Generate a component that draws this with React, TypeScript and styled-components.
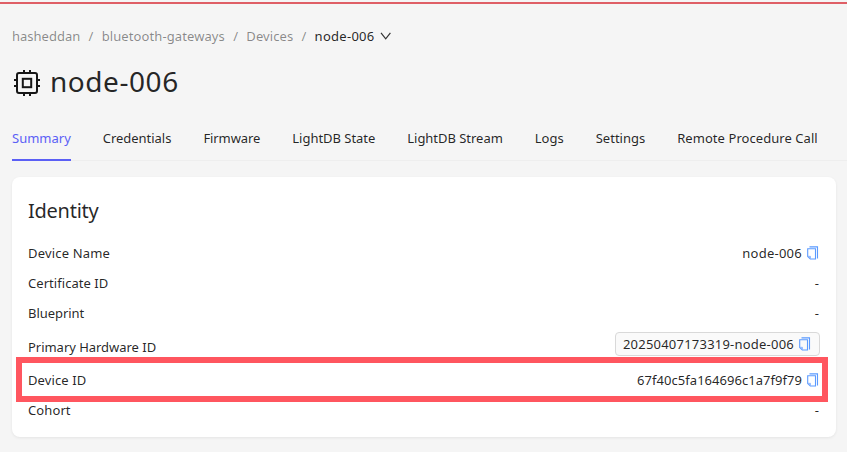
import React from "react";
import styled, { createGlobalStyle } from "styled-components";

const GlobalStyle = createGlobalStyle`
  * { box-sizing: border-box; }
  body {
    margin: 0;
    background: #f5f5f5;
    color: rgba(0, 0, 0, 0.86);
    font: 14px/22px "Noto Sans", sans-serif;
    overflow: hidden;
  }
`;

const Page = styled.main`
  height: 452px;
  display: flex;
  flex-direction: column;
  background: #f5f5f5;
  overflow: hidden;
`;

const TopLine = styled.div`
  height: 4px;
  flex: none;
  border-top: 2px solid #f5f5f5;
  background: #df5f66;
`;

const Text = styled.span<{ $spacing?: number }>`
  letter-spacing: ${(p) => p.$spacing ?? 0}px;
`;

const Breadcrumb = styled.nav`
  display: flex;
  align-items: center;
  height: 22px;
  margin: 21px 12px 0;
  font-size: 13px;
  white-space: nowrap;
  color: rgba(0, 0, 0, 0.45);
`;

const Separator = styled.span`
  width: 21.4px;
  text-align: center;
`;

const Current = styled.span`
  display: flex;
  align-items: center;
  gap: 5px;
  color: rgba(0, 0, 0, 0.86);
`;

const Heading = styled.header`
  display: flex;
  align-items: center;
  gap: 10px;
  height: 38px;
  margin: 16px 12px 0;
`;

const Title = styled.h1`
  margin: -3px 0 0;
  font-size: 28px;
  font-weight: 400;
  line-height: 38px;
  letter-spacing: 0.55px;
`;

const Tabs = styled.nav`
  display: flex;
  gap: 32px;
  height: 46px;
  margin: 14px 0 0 12px;
  border-bottom: 1px solid #eeeeee;
  white-space: nowrap;
`;

const Tab = styled.a<{ $active?: boolean; $spacing: number }>`
  height: 46px;
  padding-top: 12px;
  font-size: 13px;
  letter-spacing: ${(p) => p.$spacing}px;
  color: ${(p) => (p.$active ? "#5b5ff5" : "inherit")};
  border-bottom: 2px solid ${(p) => (p.$active ? "#5b5ff5" : "transparent")};
`;

const Card = styled.section`
  width: 824px;
  height: 260px;
  flex: none;
  margin: 16px 0 0 12px;
  padding: 16px;
  background: #fff;
  border-radius: 8px;
  box-shadow: 0 1px 3px rgba(0, 0, 0, 0.07);
`;

const CardTitle = styled.h2`
  margin: 3px 0 16px;
  font-size: 20px;
  font-weight: 400;
  line-height: 30px;
  letter-spacing: -0.25px;
`;

const Rows = styled.dl`
  display: flex;
  flex-direction: column;
  gap: 8px;
  margin: 0;
`;

const Row = styled.div<{ $tall?: boolean; $marked?: boolean }>`
  display: flex;
  justify-content: space-between;
  align-items: center;
  height: ${(p) => (p.$tall ? 29 : 22)}px;
  font-size: 13px;
  ${(p) =>
    p.$marked &&
    `
    height: 33px;
    margin: -6px -2px -5px -6px;
    padding: 0 2px 0 6px;
    outline: 6px solid #ff565f;
  `}
`;

const Label = styled.dt<{ $spacing?: number }>`
  letter-spacing: ${(p) => p.$spacing ?? 0}px;
`;

const Value = styled.dd<{ $empty?: boolean }>`
  display: flex;
  align-items: center;
  gap: 4px;
  margin: 0;
  padding-right: ${(p) => (p.$empty ? 1 : 0)}px;
`;

const Tag = styled.dd`
  display: flex;
  align-items: center;
  align-self: flex-start;
  gap: 4px;
  height: 24px;
  margin: 0;
  padding: 0 7px;
  background: #fafafa;
  border: 1px solid #d9d9d9;
  border-radius: 4px;
`;

const CopyIcon = () => (
  <svg width="14" height="14" viewBox="0 0 14 14" fill="none" stroke="#5b9aff">
    <path d="M3.5 .9h8v11.6" strokeWidth="1.1" />
    <path d="M1.7 2.8h7.8v10.2H4.3L1.7 10.5z" strokeWidth="1.1" />
    <path d="M2 10.3h2.5v2.5z" fill="#8db8ff" stroke="#8db8ff" strokeWidth=".8" />
  </svg>
);

const ChipIcon = () => (
  <svg width="28" height="28" viewBox="0 0 28 28" fill="none" stroke="#161616">
    <rect x="5" y="5" width="20" height="20" rx="2" strokeWidth="2" />
    <rect x="10.8" y="10.8" width="8.4" height="8.4" strokeWidth="2" />
    <path
      d="M12 2v3M18 2v3M12 25v3M18 25v3M2 12h3M2 18h3M25 12h3M25 18h3"
      strokeWidth="2"
    />
  </svg>
);

const ChevronIcon = () => (
  <svg width="12" height="8" viewBox="0 0 12 8" fill="none" stroke="#333" strokeWidth="1.2">
    <path d="M1 .8l4.7 6 4.7-6" />
  </svg>
);

const tabs: [string, number][] = [
  ["Summary", 0],
  ["Credentials", -0.03],
  ["Firmware", -0.08],
  ["LightDB State", -0.03],
  ["LightDB Stream", -0.03],
  ["Logs", 0],
  ["Settings", 0],
  ["Remote Procedure Call", 0.06],
];

export default function App() {
  return (
    <Page>
      <GlobalStyle />
      <TopLine />
      <Breadcrumb>
        <Text>hasheddan</Text>
        <Separator>/</Separator>
        <Text $spacing={0.1}>bluetooth-gateways</Text>
        <Separator>/</Separator>
        <Text $spacing={0.08}>Devices</Text>
        <Separator>/</Separator>
        <Current>
          <Text $spacing={0.28}>node-006</Text>
          <ChevronIcon />
        </Current>
      </Breadcrumb>
      <Heading>
        <ChipIcon />
        <Title>node-006</Title>
      </Heading>
      <Tabs>
        {tabs.map(([name, spacing], i) => (
          <Tab key={name} $active={i === 0} $spacing={spacing}>
            {name}
          </Tab>
        ))}
      </Tabs>
      <Card>
        <CardTitle>Identity</CardTitle>
        <Rows>
          <Row>
            <Label $spacing={0.18}>Device Name</Label>
            <Value>
              <Text $spacing={0.25}>node-006</Text>
              <CopyIcon />
            </Value>
          </Row>
          <Row>
            <Label $spacing={0.05}>Certificate ID</Label>
            <Value $empty>-</Value>
          </Row>
          <Row>
            <Label $spacing={-0.05}>Blueprint</Label>
            <Value $empty>-</Value>
          </Row>
          <Row $tall>
            <Label $spacing={-0.03}>Primary Hardware ID</Label>
            <Tag>
              <Text $spacing={0.22}>20250407173319-node-006</Text>
              <CopyIcon />
            </Tag>
          </Row>
          <Row $marked>
            <Label $spacing={0.1}>Device ID</Label>
            <Value>
              <Text $spacing={0.04}>67f40c5fa164696c1a7f9f79</Text>
              <CopyIcon />
            </Value>
          </Row>
          <Row>
            <Label $spacing={0.1}>Cohort</Label>
            <Value $empty>-</Value>
          </Row>
        </Rows>
      </Card>
    </Page>
  );
}
